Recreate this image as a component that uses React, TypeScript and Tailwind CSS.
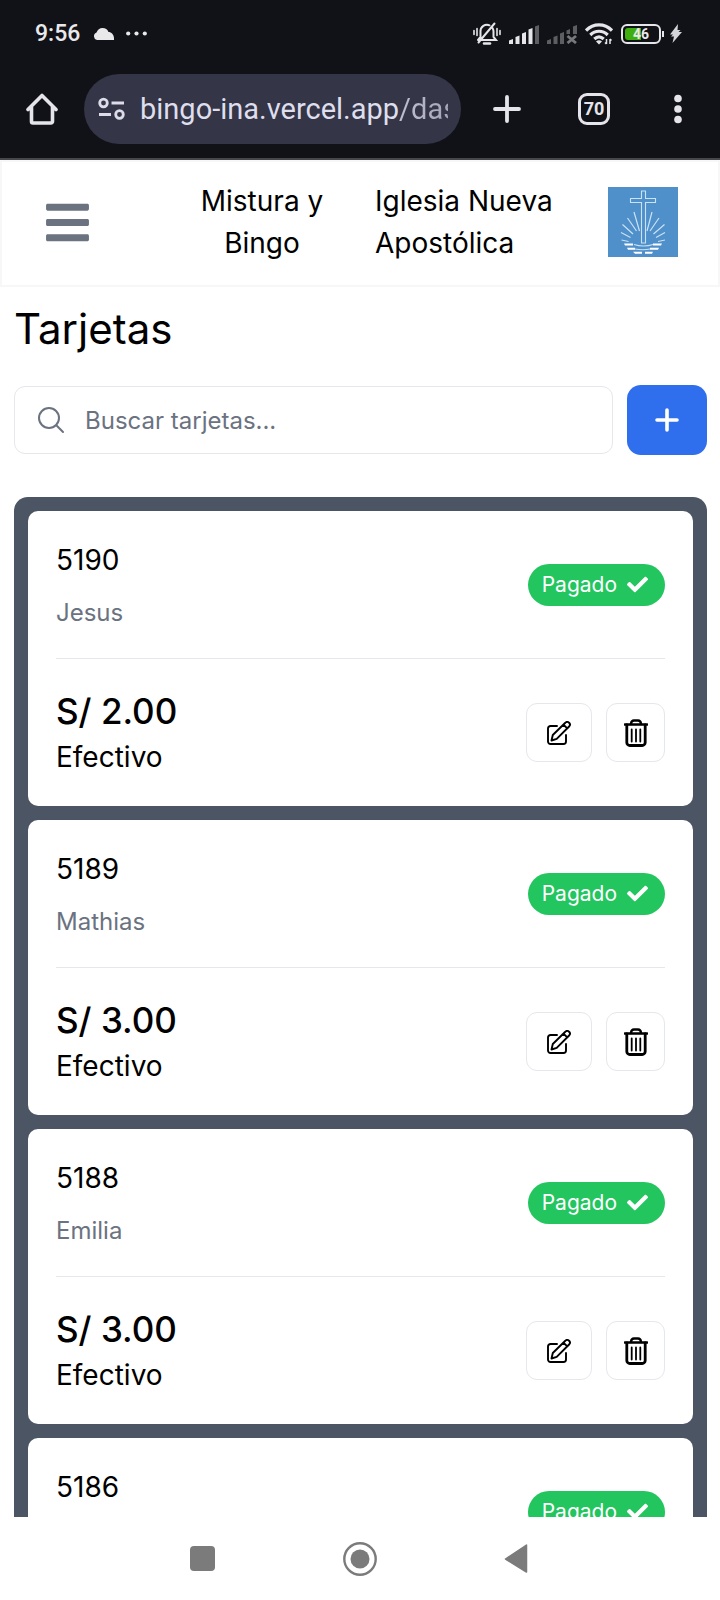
import React from "react";
import { FaBars, FaCheck } from "react-icons/fa";
import { HiOutlineMagnifyingGlass } from "react-icons/hi2";

type Card = { id: string; name: string; amount: string };

const cards: Card[] = [
  { id: "5190", name: "Jesus", amount: "S/ 2.00" },
  { id: "5189", name: "Mathias", amount: "S/ 3.00" },
  { id: "5188", name: "Emilia", amount: "S/ 3.00" },
  { id: "5186", name: "", amount: "" },
];

function BellOff() {
  return (
    <svg className="h-6 w-7" viewBox="0 0 28 24" fill="none" stroke="#e6e6ea" strokeWidth="2" strokeLinecap="round">
      <path d="M5 18h18l-2.500-3V9.500a6.500 6.500 0 0 0-1-3.500M16.500 3.300A6.500 6.500 0 0 0 7.500 9.500V15L5 18M5.500 20.500 21.500 1.500" />
      <path d="M11 21.500h6" strokeWidth="2.500" />
      <path d="M1 8.500v4M4 6.500v7M27 8.500v4M24 6.500v7" strokeWidth="1.600" />
    </svg>
  );
}

function Signal({ missing = false }: { missing?: boolean }) {
  const on = missing ? "#5d5e62" : "#e6e6ea";
  return (
    <svg className="h-5 w-[30px]" viewBox="0 0 30 20">
      <path d="M0 16.500 4 15v5H0zM6.500 13l4-1.500V20h-4zM13 9.500 17 8v12h-4z" fill={on} />
      {missing ? (
        <>
          <path d="M19.500 6.500 23 5v5h-3.500zM26 2.500 30 1v9h-4z" fill="#5d5e62" />
          <path d="m20.500 12 8.500 7m0-7-8.500 7" stroke="#77787c" strokeWidth="2.800" />
        </>
      ) : (
        <>
          <path d="M19.500 5.500l4-1.500v16h-4z" fill={on} />
          <path d="M26 2.500 30 1v19h-4z" fill="#5d5e62" />
        </>
      )}
    </svg>
  );
}

function Wifi() {
  return (
    <svg className="h-[22px] w-7" viewBox="0 0 28 22" fill="none" stroke="#e6e6ea" strokeWidth="3.200">
      <path d="M1 7.500C8.500 0 19.500 0 27 7.500M5.300 12c5-5 12.400-5 17.400 0M9.300 16c3-2.800 6.400-2.800 9.400 0" />
      <path d="m14 21.500-3-3q3-2.500 6 0z" fill="#e6e6ea" stroke="none" />
      <path d="M21.500 16v5m-1.500-1.500 1.500 1.500M25 21v-5m1.500 1.500L25 16" strokeWidth="1.500" />
    </svg>
  );
}

function Battery() {
  return (
    <div className="flex items-center gap-px">
      <div className="flex h-5 w-10 rounded-[6px] border-2 border-[#e6e6ea] p-[2px]">
        <div className="relative flex w-full items-center justify-center">
          <span className="absolute inset-y-0 left-0 w-4 rounded-l-[3px] bg-[#3fae0f]" />
          <span className="relative font-[Roboto,sans-serif] text-[14px] leading-[14px] font-bold">46</span>
        </div>
      </div>
      <span className="h-[6px] w-[2px] bg-[#e6e6ea]" />
    </div>
  );
}

function StatusBar() {
  return (
    <div className="flex h-[67px] items-center justify-between pr-[38px] pl-[35px] font-[Roboto,sans-serif] text-[#e9e9ec]">
      <div className="flex items-center">
        <span className="text-[23px] font-medium">9:56</span>
        <svg className="ml-[13px] h-3 w-[21px]" viewBox="0 0 21 12" fill="currentColor">
          <path d="M4 12a4 4 0 0 1-.500-7.600C4.500 2 6.600 0 9.500 0c3 0 5 1.400 6 4 2.800 0 5.500 2.500 5.500 6.500V12z" />
        </svg>
        <svg className="ml-3 h-[5px] w-[21px]" viewBox="0 0 21 5" fill="currentColor">
          <circle cx="2.200" cy="2.500" r="2.100" />
          <circle cx="10.500" cy="2.500" r="2.100" />
          <circle cx="18.800" cy="2.500" r="2.100" />
        </svg>
      </div>
      <div className="flex items-center gap-2">
        <BellOff />
        <Signal />
        <Signal missing />
        <Wifi />
        <div className="flex items-center gap-[6px]">
          <Battery />
          <svg className="h-[19px] w-3" viewBox="0 0 12 19" fill="#d5d5d9">
            <path d="M8 0 0 10.500h3L1 12.500h3L2.500 19 12 8H8.500l2-2H7.500z" />
          </svg>
        </div>
      </div>
    </div>
  );
}

function BrowserBar() {
  return (
    <div className="flex items-center pt-[7px] pr-[34px] pb-[14px] pl-[26px] font-[Roboto,sans-serif] text-[#e4e4ea]">
      <button type="button" aria-label="Inicio">
        <svg className="size-8" viewBox="0 0 32 32" fill="none" stroke="currentColor" strokeWidth="3.600" strokeLinejoin="round" strokeLinecap="round">
          <path d="M2 16.500 16 2.500l14 14M5.500 14v14.500a1.500 1.500 0 0 0 1.500 1.500h18a1.500 1.500 0 0 0 1.500-1.500V14" />
        </svg>
      </button>
      <div className="ml-[26px] flex h-[70px] min-w-0 flex-1 items-center gap-[15px] rounded-full bg-[#343546] pr-[13px] pl-[14px]">
        <svg className="h-6 w-[27px] shrink-0" viewBox="0 0 27 24" fill="none" stroke="#dcdcea" strokeWidth="2.800">
          <circle cx="5.500" cy="6" r="3.800" />
          <path d="M13.500 6H26M1 17.500h12" />
          <circle cx="21.500" cy="17.500" r="3.800" />
        </svg>
        <div className="min-w-0 flex-1 overflow-hidden text-[29px] leading-10 whitespace-nowrap text-[#dedeed]">
          bingo-ina.vercel.app<span className="bg-linear-to-r from-[#c0c0d0] to-[#a0a0b4] bg-clip-text text-transparent">/das</span>
        </div>
      </div>
      <button type="button" aria-label="Nueva pestaña" className="ml-8">
        <svg className="size-7" viewBox="0 0 28 28" stroke="currentColor" strokeWidth="3.800" strokeLinecap="round">
          <path d="M14 2v24M2 14h24" />
        </svg>
      </button>
      <button type="button" aria-label="Pestañas" className="ml-[57px] flex size-8 items-center justify-center rounded-[9px] border-3 border-current text-[18px] font-bold">
        70
      </button>
      <button type="button" aria-label="Menú" className="ml-[60px]">
        <svg className="h-[30px] w-4" viewBox="0 0 16 30" fill="currentColor">
          <circle cx="8" cy="4.500" r="3.800" />
          <circle cx="8" cy="15" r="3.800" />
          <circle cx="8" cy="25.500" r="3.800" />
        </svg>
      </button>
    </div>
  );
}

function ChurchLogo() {
  return (
    <svg className="size-[70px]" viewBox="0 0 70 70" role="img" aria-label="Iglesia Nueva Apostólica">
      <rect width="70" height="70" fill="#4f8fca" />
      <g fill="none" stroke="#c9e2f5">
        <path d="M33.500 56V15.500h-11v-4h11V4h4v7.500h10v4h-10V56z" strokeWidth="1.100" />
        <path
          d="M31.500 44 26 25M39 44l5-19M28.500 44 19.500 31M42 44 51 31M25 47 14.500 37.500M45.500 47 56.500 37.500M22.500 50.500 13 45.500M48 50.500l9-5M20.500 54.500l-7-1.500M50 54.500l7-1.500"
          strokeWidth="1.200"
        />
        <path d="M26 57.500q4.500 1.500 9.500 1.500t9.500-1.500M27 62q8 1.500 15 0" strokeWidth="1.100" />
      </g>
      <path d="M16 56.500h9v2h-8zM45 56.500h9l-1 2h-8zM19 60.700h8v2h-7zM42 60.700h9l-1 2h-8zM25 64.700h9v2h-7zM37 64.700h8l-1 2h-7z" fill="#fff" />
    </svg>
  );
}

function AppHeader() {
  return (
    <header className="flex items-center border-2 border-[#f7f7f8] pt-[18px] pr-10 pb-[21px] pl-11">
      <button type="button" aria-label="Abrir menú" className="mr-auto text-[#6b7280]">
        <FaBars className="h-[49px] w-[43px]" />
      </button>
      <p className="w-[126px] text-center">Mistura y Bingo</p>
      <p className="ml-[50px] w-[182px]">Iglesia Nueva Apostólica</p>
      <div className="ml-[51px]">
        <ChurchLogo />
      </div>
    </header>
  );
}

function EditIcon() {
  return (
    <svg className="size-6" viewBox="0 0 24 24" fill="none" stroke="currentColor" strokeWidth="1.900" strokeLinecap="round" strokeLinejoin="round">
      <path d="M10 5H3.500A2.500 2.500 0 0 0 1 7.500v13A2.500 2.500 0 0 0 3.500 23h13a2.500 2.500 0 0 0 2.500-2.500V14" />
      <path d="m4.500 19.500 1.300-5.500L18.300 1.800a2.600 2.600 0 0 1 3.800 3.700L9.700 17.800zM16.500 3.700l3.800 3.700" />
    </svg>
  );
}

function TrashIcon() {
  return (
    <svg className="h-7 w-6" viewBox="0 0 24 28" fill="none" stroke="currentColor" strokeLinecap="round">
      <path d="M1 5.500h22" strokeWidth="2.600" />
      <path d="M7 5c.200-2.500 1-3.500 3-3.500h4c2 0 2.800 1 3 3.500" strokeWidth="2.400" />
      <path d="M2.800 6v17.500A3 3 0 0 0 5.800 26.500h12.400a3 3 0 0 0 3-3V6" strokeWidth="2.800" />
      <path d="M7.700 10.500v12M12 10.500v12M16.300 10.500v12" strokeWidth="1.800" />
    </svg>
  );
}

function CardItem({ card }: { card: Card }) {
  return (
    <li className="rounded-[10px] bg-white p-7">
      <div className="flex items-center justify-between border-b border-[#e5e7eb] pb-7">
        <div>
          <p className="mb-[14px]">{card.id}</p>
          <p className="h-[35px] text-[24px] leading-[35px] text-[#6b7280]">{card.name}</p>
        </div>
        <span className="flex h-[42px] items-center gap-[10px] rounded-full bg-[#22c55e] pr-[17px] pl-[14px] text-[21px] leading-7 text-white">
          Pagado
          <FaCheck className="size-[21px]" />
        </span>
      </div>
      <div className="flex items-center justify-between pt-7">
        <div>
          <p className="text-[35px] leading-[49px] font-medium">{card.amount}</p>
          {card.amount && <p>Efectivo</p>}
        </div>
        <div className="flex gap-[14px]">
          <button type="button" aria-label={`Editar ${card.id}`} className="flex h-[59px] w-[66px] items-center justify-center rounded-[11px] border border-[#e5e7eb]">
            <EditIcon />
          </button>
          <button type="button" aria-label={`Eliminar ${card.id}`} className="flex h-[59px] w-[59px] items-center justify-center rounded-[11px] border border-[#e5e7eb]">
            <TrashIcon />
          </button>
        </div>
      </div>
    </li>
  );
}

function SystemNav() {
  return (
    <nav className="grid h-[83px] shrink-0 grid-cols-[1fr_156px_156px_1fr] items-center bg-white text-[#7b7b7b]">
      <button type="button" aria-label="Recientes" className="col-start-1 -mr-3 justify-self-end">
        <svg className="h-[34px] w-[26px]" viewBox="0 0 26 34">
          <rect x="0" y="4" width="25" height="25" rx="4" fill="currentColor" />
        </svg>
      </button>
      <button type="button" aria-label="Página principal" className="col-start-2 -mr-[17px] justify-self-end">
        <svg className="size-[34px]" viewBox="0 0 34 34">
          <circle cx="17" cy="17" r="15.700" fill="none" stroke="currentColor" strokeWidth="2.400" />
          <circle cx="17" cy="17" r="9.500" fill="currentColor" />
        </svg>
      </button>
      <button type="button" aria-label="Atrás" className="col-start-3 -mr-3 justify-self-end">
        <svg className="h-[34px] w-6" viewBox="0 0 24 34">
          <path d="M22.500 3v27L1.500 17z" fill="currentColor" stroke="currentColor" strokeWidth="1.500" strokeLinejoin="round" />
        </svg>
      </button>
    </nav>
  );
}

export default function App() {
  return (
    <div className="flex h-screen flex-col bg-white font-[Inter,sans-serif] text-[28px] leading-[42px] text-black">
      <div className="shrink-0 border-b-2 border-[#46474b] bg-[#111217]">
        <StatusBar />
        <BrowserBar />
      </div>
      <div className="min-h-0 flex-1 overflow-y-auto [scrollbar-width:none]">
        <AppHeader />
        <main className="pt-[14px] pr-[13px] pl-[14px]">
          <h1 className="text-[42px] leading-[56px]">Tarjetas</h1>
          <div className="mt-7 flex items-center gap-[14px]">
            <label className="flex h-[68px] flex-1 items-center gap-[18px] rounded-[11px] border border-[#e5e7eb] pl-5 text-[#6b7280]">
              <HiOutlineMagnifyingGlass className="size-8" />
              <input
                type="search"
                aria-label="Buscar tarjetas"
                placeholder="Buscar tarjetas..."
                className="min-w-0 flex-1 bg-transparent text-[24px] leading-[35px] outline-none placeholder:text-[#6b7280]"
              />
            </label>
            <button type="button" aria-label="Agregar tarjeta" className="flex h-[70px] w-20 items-center justify-center rounded-[14px] bg-[#2f6fed] text-white">
              <svg className="size-6" viewBox="0 0 24 24" stroke="currentColor" strokeWidth="3.600" strokeLinecap="round">
                <path d="M12 2v20M2 12h20" />
              </svg>
            </button>
          </div>
          <ul className="mt-[42px] flex flex-col gap-[14px] rounded-[14px] bg-[#4b5563] p-[14px]">
            {cards.map((card) => (
              <CardItem key={card.id} card={card} />
            ))}
          </ul>
        </main>
      </div>
      <SystemNav />
    </div>
  );
}
